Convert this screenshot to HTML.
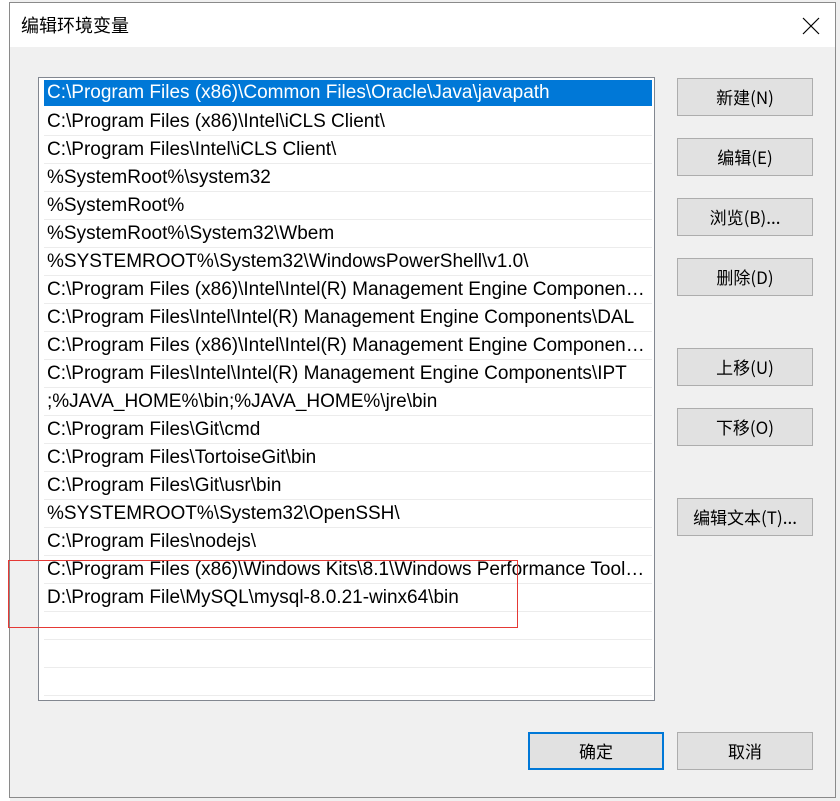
<!DOCTYPE html>
<html><head><meta charset="utf-8"><style>
*{margin:0;padding:0;box-sizing:border-box}
body{width:840px;height:801px;background:#f0f0f0;position:relative;overflow:hidden;font-family:"Liberation Sans","Noto Sans CJK SC",sans-serif;color:#000}
.strip{position:absolute;left:0;top:0;width:10px;height:801px;background:#fff}
.dlg{position:absolute;left:9px;top:2px;width:827px;height:796px;background:#f0f0f0;border:1px solid #8a8a8a}
.title{position:absolute;left:0;top:0;width:100%;height:44px;background:#fff;font-size:18px;padding:9px 0 0 11px;font-family:"Noto Sans CJK SC",sans-serif}
.x{position:absolute;right:14px;top:13px;width:20px;height:20px}
.list{position:absolute;left:38px;top:77px;width:617px;height:624px;background:#fff;border:1px solid #828790}
.row{position:absolute;left:5px;width:608px;height:28px;border-bottom:1px solid #ececec;font-size:19px;line-height:27px;padding:0 6px 0 3px;white-space:nowrap;overflow:hidden;text-overflow:ellipsis}
.sel{background:#0078d7;color:#fff;border-bottom:none;height:26px;line-height:25px}
.btn{position:absolute;width:136px;height:38px;background:#e1e1e1;border:1px solid #adadad;font-size:17px;text-align:center;line-height:36px;font-family:"Noto Sans CJK SC",sans-serif}
.red{position:absolute;left:8px;top:560px;width:510px;height:68px;border:1px solid #e53935;z-index:5}
</style></head><body>
<div class="strip"></div>
<div class="dlg">
<div class="title">编辑环境变量</div>
<svg class="x" viewBox="0 0 20 20"><path d="M2 2L18 18M18 2L2 18" stroke="#000" stroke-width="1.2"/></svg>
</div>
<div class="list">
<div class="row sel" style="top:2px">C:\Program Files (x86)\Common Files\Oracle\Java\javapath</div>
<div class="row" style="top:30px">C:\Program Files (x86)\Intel\iCLS Client\</div>
<div class="row" style="top:58px">C:\Program Files\Intel\iCLS Client\</div>
<div class="row" style="top:86px">%SystemRoot%\system32</div>
<div class="row" style="top:114px">%SystemRoot%</div>
<div class="row" style="top:142px">%SystemRoot%\System32\Wbem</div>
<div class="row" style="top:170px">%SYSTEMROOT%\System32\WindowsPowerShell\v1.0\</div>
<div class="row" style="top:198px">C:\Program Files (x86)\Intel\Intel(R) Management Engine Components\DAL</div>
<div class="row" style="top:226px">C:\Program Files\Intel\Intel(R) Management Engine Components\DAL</div>
<div class="row" style="top:254px">C:\Program Files (x86)\Intel\Intel(R) Management Engine Components\IPT</div>
<div class="row" style="top:282px">C:\Program Files\Intel\Intel(R) Management Engine Components\IPT</div>
<div class="row" style="top:310px">;%JAVA_HOME%\bin;%JAVA_HOME%\jre\bin</div>
<div class="row" style="top:338px">C:\Program Files\Git\cmd</div>
<div class="row" style="top:366px">C:\Program Files\TortoiseGit\bin</div>
<div class="row" style="top:394px">C:\Program Files\Git\usr\bin</div>
<div class="row" style="top:422px">%SYSTEMROOT%\System32\OpenSSH\</div>
<div class="row" style="top:450px">C:\Program Files\nodejs\</div>
<div class="row" style="top:478px">C:\Program Files (x86)\Windows Kits\8.1\Windows Performance Toolkit\</div>
<div class="row" style="top:506px">D:\Program File\MySQL\mysql-8.0.21-winx64\bin</div>
<div class="row" style="top:534px"></div>
<div class="row" style="top:562px"></div>
<div class="row" style="top:590px"></div>
</div>
<div class="btn" style="left:677px;top:78px">新建(N)</div>
<div class="btn" style="left:677px;top:138px">编辑(E)</div>
<div class="btn" style="left:677px;top:198px">浏览(B)...</div>
<div class="btn" style="left:677px;top:258px">删除(D)</div>
<div class="btn" style="left:677px;top:348px">上移(U)</div>
<div class="btn" style="left:677px;top:408px">下移(O)</div>
<div class="btn" style="left:677px;top:498px">编辑文本(T)...</div>
<div class="btn" style="left:528px;top:732px;border:2px solid #0078d7;line-height:34px">确定</div>
<div class="btn" style="left:677px;top:732px">取消</div>
<div class="red"></div>
</body></html>
